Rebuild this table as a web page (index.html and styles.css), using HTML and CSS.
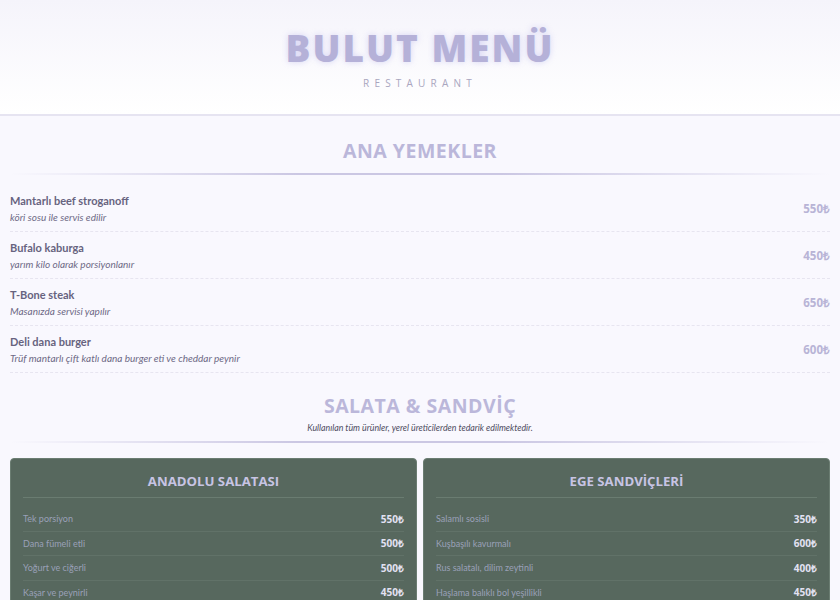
FILE: index.html
```html
<!DOCTYPE html>
<html lang="tr">
<head>
<meta charset="utf-8">
<title>Bulut Menü</title>
<link rel="stylesheet" href="styles.css">
</head>
<body>
<header class="hero">
  <h1 class="brand">BULUT MENÜ</h1>
  <div class="tagline">RESTAURANT</div>
</header>
<main class="menu">
  <section class="section">
    <h2 class="section-title">ANA YEMEKLER</h2>
    <div class="rule"></div>
    <ul class="dish-list">
      <li class="dish">
        <div class="dish-info"><div class="dish-name">Mantarlı beef stroganoff</div><div class="dish-desc">köri sosu ile servis edilir</div></div>
        <div class="dish-price">550₺</div>
      </li>
      <li class="dish">
        <div class="dish-info"><div class="dish-name">Bufalo kaburga</div><div class="dish-desc">yarım kilo olarak porsiyonlanır</div></div>
        <div class="dish-price">450₺</div>
      </li>
      <li class="dish">
        <div class="dish-info"><div class="dish-name">T-Bone steak</div><div class="dish-desc">Masanızda servisi yapılır</div></div>
        <div class="dish-price">650₺</div>
      </li>
      <li class="dish">
        <div class="dish-info"><div class="dish-name">Deli dana burger</div><div class="dish-desc">Trüf mantarlı çift katlı dana burger eti ve cheddar peynir</div></div>
        <div class="dish-price">600₺</div>
      </li>
    </ul>
  </section>
  <section class="section">
    <h2 class="section-title second">SALATA &amp; SANDVİÇ</h2>
    <p class="section-note">Kullanılan tüm ürünler, yerel üreticilerden tedarik edilmektedir.</p>
    <div class="rule"></div>
    <div class="cards">
      <div class="card">
        <h3 class="card-title">ANADOLU SALATASI</h3>
        <ul class="card-list">
          <li class="card-row"><span>Tek porsiyon</span><b>550₺</b></li>
          <li class="card-row"><span>Dana fümeli etli</span><b>500₺</b></li>
          <li class="card-row"><span>Yoğurt ve ciğerli</span><b>500₺</b></li>
          <li class="card-row"><span>Kaşar ve peynirli</span><b>450₺</b></li>
          <li class="card-row"><span>Ton balıklı</span><b>500₺</b></li>
          <li class="card-row"><span>Tavuklu</span><b>450₺</b></li>
        </ul>
      </div>
      <div class="card">
        <h3 class="card-title">EGE SANDVİÇLERİ</h3>
        <ul class="card-list">
          <li class="card-row"><span>Salamlı sosisli</span><b>350₺</b></li>
          <li class="card-row"><span>Kuşbaşılı kavurmalı</span><b>600₺</b></li>
          <li class="card-row"><span>Rus salatalı, dilim zeytinli</span><b>400₺</b></li>
          <li class="card-row"><span>Haşlama balıklı bol yeşillikli</span><b>450₺</b></li>
          <li class="card-row"><span>Hindi füme</span><b>400₺</b></li>
          <li class="card-row"><span>Izgara köfteli</span><b>500₺</b></li>
        </ul>
      </div>
    </div>
  </section>
  <section class="section">
    <h2 class="section-title second">TATLILAR</h2>
    <div class="rule"></div>
    <ul class="dish-list">
      <li class="dish">
        <div class="dish-info"><div class="dish-name">Fıstıklı baklava</div><div class="dish-desc">günlük taze olarak hazırlanır</div></div>
        <div class="dish-price">300₺</div>
      </li>
      <li class="dish">
        <div class="dish-info"><div class="dish-name">Fırın sütlaç</div><div class="dish-desc">tarçın ile servis edilir</div></div>
        <div class="dish-price">200₺</div>
      </li>
      <li class="dish">
        <div class="dish-info"><div class="dish-name">Künefe</div><div class="dish-desc">kaymak ve fıstık ile</div></div>
        <div class="dish-price">350₺</div>
      </li>
      <li class="dish">
        <div class="dish-info"><div class="dish-name">Kazandibi</div><div class="dish-desc">dondurma ile servis edilir</div></div>
        <div class="dish-price">250₺</div>
      </li>
    </ul>
  </section>
  <footer class="foot">© Bulut Menü Restaurant</footer>
</main>
</body>
</html>
```
FILE: styles.css
```css
html { background: #f9f8fe; }
body { margin: 0; font-family: "Lato", "Open Sans", sans-serif; color: #5f5b78; }
.hero {
  height: 114px;
  background: linear-gradient(#f5f4fb, #ffffff);
  border-bottom: 2px solid #e6e4f1;
  display: flex; flex-direction: column; align-items: center;
}
.brand {
  margin: 27px 0 0;
  font-family: "Open Sans", sans-serif; font-weight: 800;
  font-size: 37px; line-height: 42px; letter-spacing: 2px;
  color: #b5b1d8;
  text-shadow: 0 0 6px rgba(200,196,240,0.7);
}
.tagline {
  margin-top: 7px;
  font-family: "Open Sans", sans-serif; font-size: 10px; letter-spacing: 5.2px;
  color: #a9a6bf; line-height: 14px;
}
.menu { padding: 0 10px 40px 10px; }
.section-title {
  margin: 21px 0 0; text-align: center;
  font-family: "Open Sans", sans-serif; font-weight: 700;
  font-size: 19.5px; line-height: 28px; letter-spacing: 0.5px; color: #bbb7da;
}
.section-title.second { margin-top: 19px; }
.section-note {
  margin: 2px 0 0; text-align: center; font-style: italic; font-size: 8.8px; color: #4e4c5e;
}
.rule {
  height: 2px; margin-top: 8px;
  background: linear-gradient(90deg, rgba(200,196,224,0) 0%, #cbc7e3 35%, #cbc7e3 60%, rgba(200,196,224,0) 100%);
}
.dish-list { list-style: none; margin: 10px 0 0; padding: 0; }
.dish {
  display: flex; justify-content: space-between; align-items: center;
  height: 46px; border-bottom: 1px dashed #e7e5f0;
}
.dish-name { font-size: 11px; font-weight: 700; color: #67637f; line-height: 16px; }
.dish-desc { font-size: 10px; font-style: italic; color: #6d6985; line-height: 14px; margin-top: 1px; }
.dish-price { font-family: "Open Sans", sans-serif; font-weight: 700; font-size: 11.5px; color: #b8b4d6; }
.cards { display: grid; grid-template-columns: 1fr 1fr; gap: 6px; margin-top: 15px; }
.card {
  background: #57685e; border: 1px solid #6b7d72; border-radius: 4px;
  padding: 0 12px 12px;
}
.card-title {
  margin: 0; text-align: center; height: 38px; line-height: 44px;
  border-bottom: 1px solid #6a7c71;
  font-family: "Open Sans", sans-serif; font-weight: 700; font-size: 13.2px; color: #c7c4e4;
}
.card-list { list-style: none; margin: 9px 0 0; padding: 0; }
.card-row {
  display: flex; justify-content: space-between; align-items: center;
  height: 23.5px; border-bottom: 1px solid #617268;
}
.card-row span { font-size: 9px; color: #9aa0b8; }
.card-row b { font-family: "Open Sans", sans-serif; font-size: 10px; font-weight: 700; color: #e2e1f2; }
.foot { text-align: center; font-size: 10px; color: #a9a6bf; margin-top: 30px; }
```
